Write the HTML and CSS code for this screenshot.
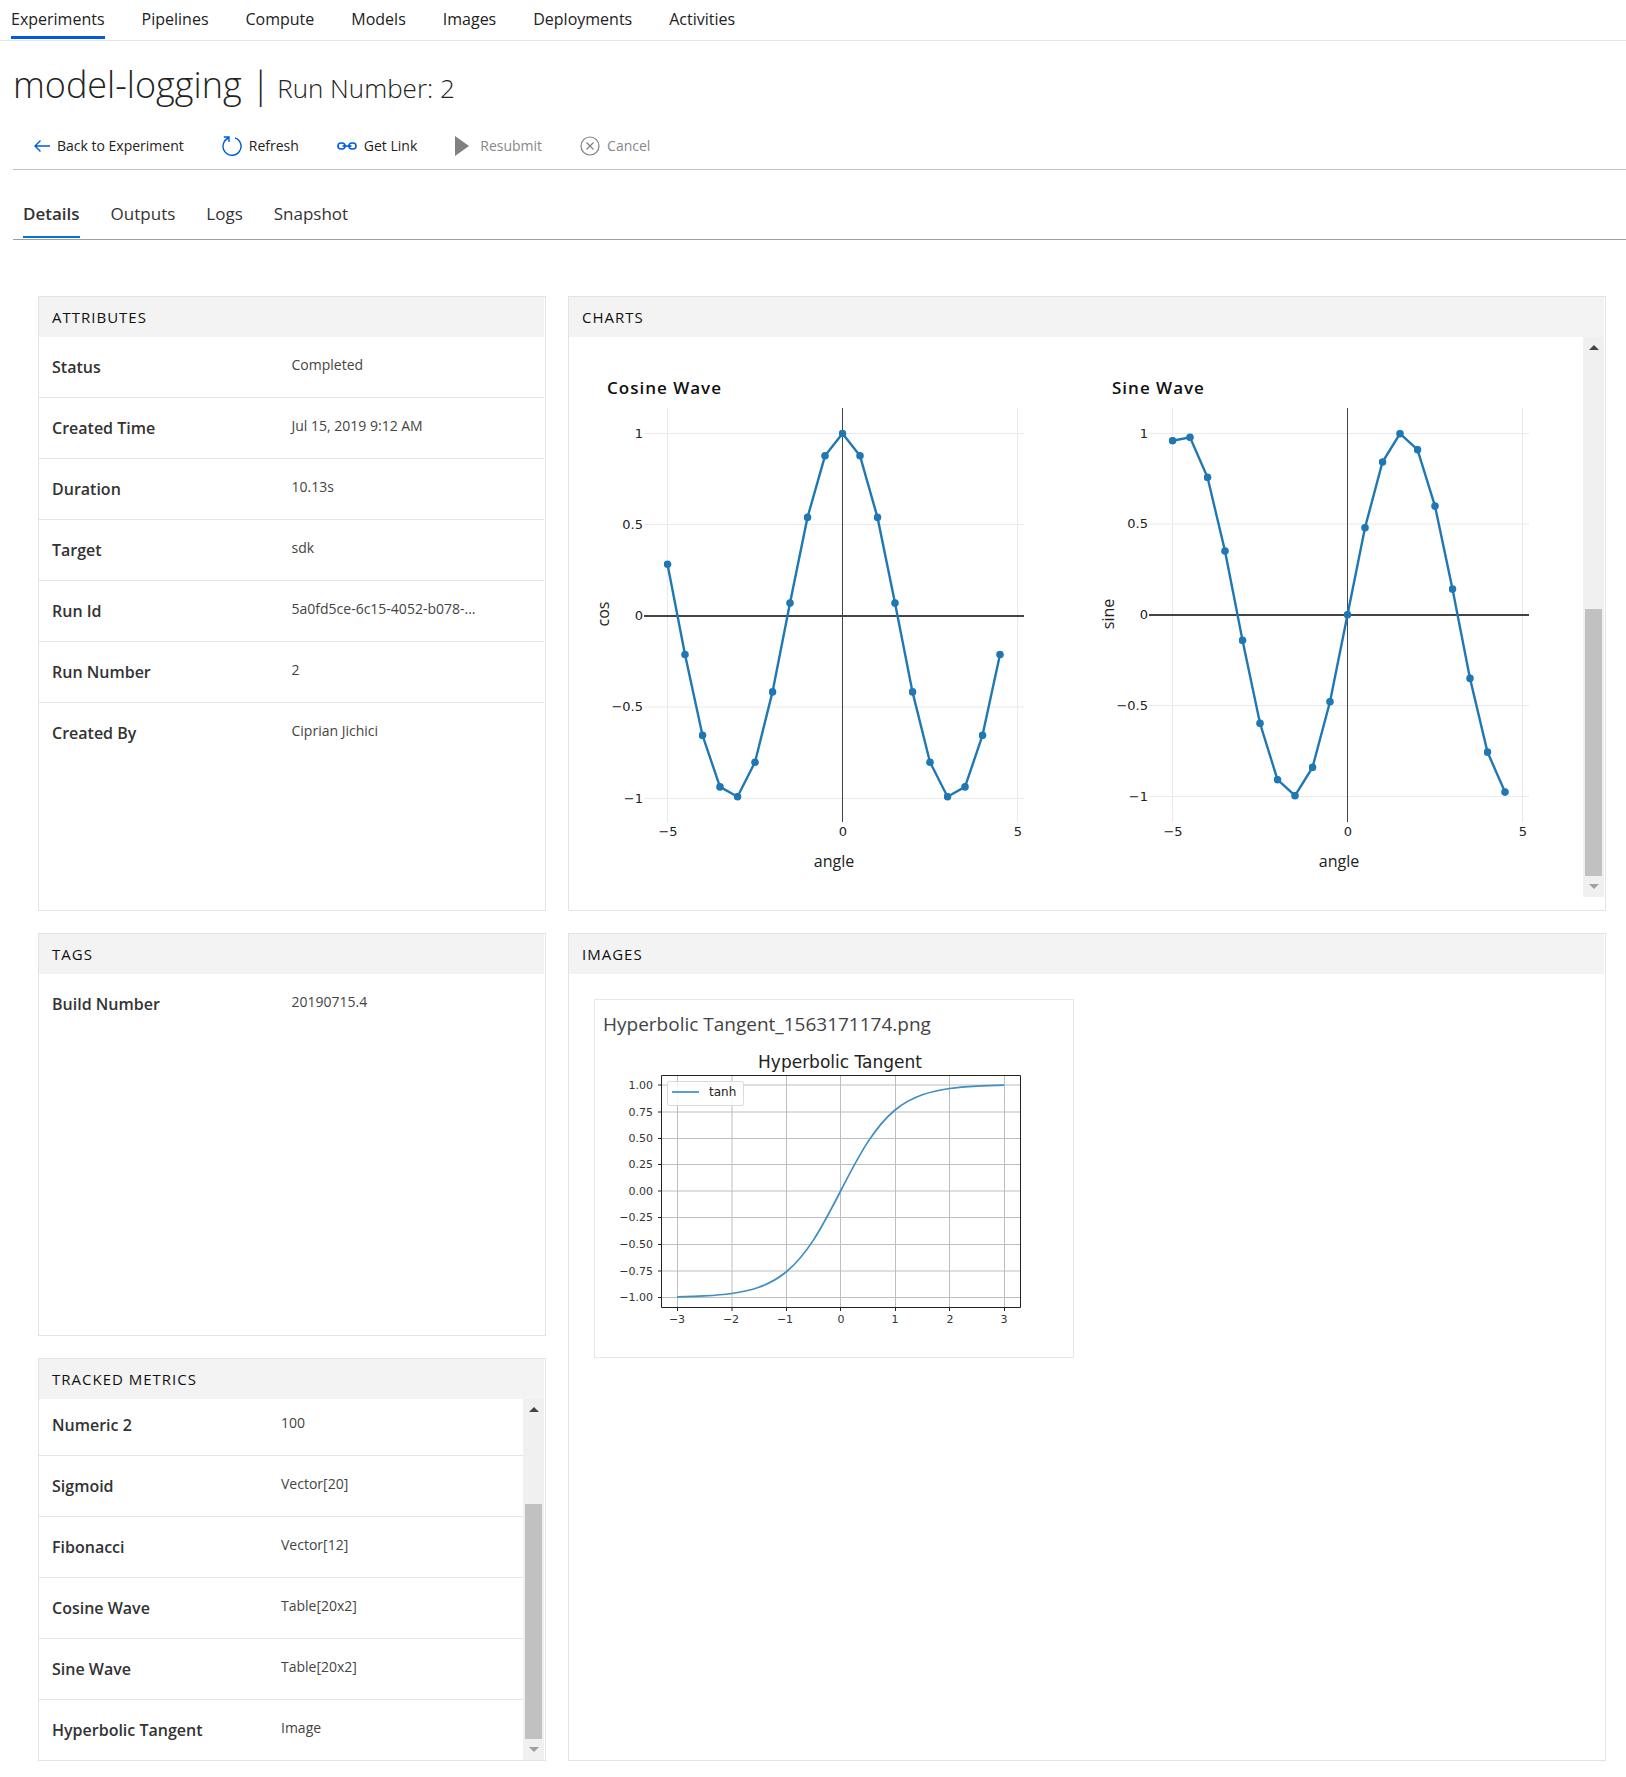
FILE: index.html
```html
<!DOCTYPE html>
<html lang="en">
<head>
<meta charset="utf-8">
<meta name="viewport" content="width=device-width, initial-scale=1">
<title>model-logging | Run Number: 2</title>
<link rel="stylesheet" href="styles.css">
</head>
<body>
<nav class="topnav" aria-label="Workspace">
  <a class="topnav-link is-active" href="#experiments">Experiments</a>
  <a class="topnav-link" href="#pipelines">Pipelines</a>
  <a class="topnav-link" href="#compute">Compute</a>
  <a class="topnav-link" href="#models">Models</a>
  <a class="topnav-link" href="#images">Images</a>
  <a class="topnav-link" href="#deployments">Deployments</a>
  <a class="topnav-link" href="#activities">Activities</a>
</nav>

<header class="run-header">
  <h1 class="run-title">model-logging |<span class="run-number"> Run Number: 2</span></h1>
  <div class="toolbar">
    <button class="tool" type="button">
      <svg class="icon" width="16" height="12" viewBox="0 0 16 12" fill="none" stroke="#015cda" stroke-width="1.4"><path d="M16 6H1M6.500 .5L1 6l5.500 5.500"/></svg>
      Back to Experiment
    </button>
    <button class="tool" type="button">
      <svg class="icon" width="20" height="22" viewBox="0 0 20 22" fill="none" stroke="#015cda" stroke-width="1.4"><path d="M13 2.800A9 9 0 1 1 6.500 3M1.800 2H7v5"/></svg>
      Refresh
    </button>
    <button class="tool" type="button">
      <svg class="icon" width="20" height="10" viewBox="0 0 20 10" fill="none" stroke="#015cda" stroke-width="1.600"><rect x="1" y="2" width="7" height="6" rx="3"/><rect x="12" y="2" width="7" height="6" rx="3"/><path d="M5.500 5h9"/></svg>
      Get Link
    </button>
    <button class="tool" type="button" disabled>
      <svg class="icon" width="18" height="20" viewBox="0 0 18 20" fill="#808080"><path d="M0 0l14 10L0 20z"/></svg>
      Resubmit
    </button>
    <button class="tool" type="button" disabled>
      <svg class="icon" width="20" height="20" viewBox="0 0 20 20" fill="none" stroke="#808080" stroke-width="1.2"><circle cx="10" cy="10" r="9"/><path d="M6.500 6.500l7 7m0-7l-7 7"/></svg>
      Cancel
    </button>
  </div>
  <nav class="tabs" aria-label="Run">
    <a class="tab is-active" href="#details">Details</a>
    <a class="tab" href="#outputs">Outputs</a>
    <a class="tab" href="#logs">Logs</a>
    <a class="tab" href="#snapshot">Snapshot</a>
  </nav>
</header>

<main class="board">
  <section class="panel panel-attributes">
    <h2 class="panel-title">Attributes</h2>
    <table class="facts">
      <tr><th scope="row">Status</th><td>Completed</td></tr>
      <tr><th scope="row">Created Time</th><td>Jul 15, 2019 9:12 AM</td></tr>
      <tr><th scope="row">Duration</th><td>10.13s</td></tr>
      <tr><th scope="row">Target</th><td>sdk</td></tr>
      <tr><th scope="row">Run Id</th><td>5a0fd5ce-6c15-4052-b078-...</td></tr>
      <tr><th scope="row">Run Number</th><td>2</td></tr>
      <tr><th scope="row">Created By</th><td>Ciprian Jichici</td></tr>
    </table>
  </section>

  <section class="panel panel-charts">
    <h2 class="panel-title">Charts</h2>
    <div class="scroll-area">
      <div class="charts">
        <figure class="chart">
          <figcaption class="chart-title">Cosine Wave</figcaption>
          <svg class="plot" width="470" height="480" viewBox="0 0 470 480" role="img" aria-label="Cosine wave">
            <defs><marker id="dot" markerUnits="userSpaceOnUse" markerWidth="8" markerHeight="8" refX="4" refY="4"><circle cx="4" cy="4" r="3.800" fill="#1f77b4"/></marker></defs>
            <path class="grid" d="M77.500 8v414M427.500 8v414M54 33.500h380M54 124.500h380M54 307h380M54 398.500h380"/>
            <path class="axis" d="M252.500 8v414"/>
            <path class="axis axis-zero" d="M54 216h380"/>
            <polyline class="series" stroke-width="2.4" points="77.5,164.2 95,254.5 112.5,335.3 130,386.9 147.5,396.7 165,362.2 182.5,291.9 200,203.1 217.5,117.4 235,55.8 252.5,33.5 270,55.8 287.5,117.4 305,203.1 322.5,291.9 340,362.2 357.5,396.7 375,386.9 392.5,335.3 410,254.5"/>
            <g class="tick tick-y"><text x="53" y="38">1</text><text x="53" y="129">0.5</text><text x="53" y="220">0</text><text x="53" y="311">−0.5</text><text x="53" y="403">−1</text></g>
            <g class="tick"><text x="78" y="436">−5</text><text x="253" y="436">0</text><text x="428" y="436">5</text></g>
            <text class="axis-name" x="244" y="467">angle</text>
            <text class="axis-name" transform="translate(19 214) rotate(-90)">cos</text>
          </svg>
        </figure>
        <figure class="chart">
          <figcaption class="chart-title">Sine Wave</figcaption>
          <svg class="plot" width="470" height="480" viewBox="0 0 470 480" role="img" aria-label="Sine wave">
            <path class="grid" d="M77.500 8v414M427.500 8v414M54 33.500h380M54 124h380M54 305.500h380M54 396.500h380"/>
            <path class="axis" d="M252.500 8v414"/>
            <path class="axis axis-zero" d="M54 215h380"/>
            <polyline class="series" stroke-width="2.4" points="77.5,40.7 95,37.3 112.5,77.3 130,151 147.5,240.3 165,323.3 182.5,379.7 200,395.7 217.5,367.4 235,301.7 252.5,214.7 270,127.7 287.5,62 305,33.7 322.5,49.7 340,106.1 357.5,189.1 375,278.4 392.5,352.1 410,392.1"/>
            <g class="tick tick-y"><text x="53" y="38">1</text><text x="53" y="128">0.5</text><text x="53" y="219">0</text><text x="53" y="310">−0.5</text><text x="53" y="401">−1</text></g>
            <g class="tick"><text x="78" y="436">−5</text><text x="253" y="436">0</text><text x="428" y="436">5</text></g>
            <text class="axis-name" x="244" y="467">angle</text>
            <text class="axis-name" transform="translate(19 214) rotate(-90)">sine</text>
          </svg>
        </figure>
      </div>
      <div class="scrollbar scrollbar-charts" aria-hidden="true"><i class="arrow-up"></i><i class="thumb"></i><i class="arrow-down"></i></div>
    </div>
  </section>

  <section class="panel panel-tags">
    <h2 class="panel-title">Tags</h2>
    <table class="facts">
      <tr><th scope="row">Build Number</th><td>20190715.4</td></tr>
    </table>
  </section>

  <section class="panel panel-metrics">
    <h2 class="panel-title">Tracked Metrics</h2>
    <div class="scroll-area">
      <div class="scrolled-end">
        <table class="facts">
          <tr><th scope="row">Numeric 2</th><td>100</td></tr>
          <tr><th scope="row">Sigmoid</th><td>Vector[20]</td></tr>
          <tr><th scope="row">Fibonacci</th><td>Vector[12]</td></tr>
          <tr><th scope="row">Cosine Wave</th><td>Table[20x2]</td></tr>
          <tr><th scope="row">Sine Wave</th><td>Table[20x2]</td></tr>
          <tr><th scope="row">Hyperbolic Tangent</th><td>Image</td></tr>
        </table>
      </div>
      <div class="scrollbar scrollbar-metrics" aria-hidden="true"><i class="arrow-up"></i><i class="thumb"></i><i class="arrow-down"></i></div>
    </div>
  </section>

  <section class="panel panel-images">
    <h2 class="panel-title">Images</h2>
    <figure class="image-card">
      <figcaption class="image-name">Hyperbolic Tangent_1563171174.png</figcaption>
      <svg class="plot" width="440" height="284" viewBox="0 0 440 284" role="img" aria-label="Hyperbolic tangent">
        <path class="mpl-grid" d="M77.500 25.500v232M132 25.500v232M186.500 25.500v232M240.500 25.500v232M295.500 25.500v232M349.500 25.500v232M404.500 25.500v232M61.500 35h359M61.500 62h359M61.500 88.500h359M61.500 114.500h359M61.500 141h359M61.500 167.500h359M61.500 194.500h359M61.500 221h359M61.500 247.500h359"/>
        <path class="mpl-curve" stroke-width="1.7" d="M77.100 246.800C86.200 246.600 95.300 246.400 104.400 245.900S122.500 244.800 131.600 243.500S149.800 240.400 158.900 237.200S177 229.400 186.100 222S204.300 204 213.400 190.100S231.500 158.700 240.600 141S258.800 105.800 267.900 91.900S286 67.400 295.100 60S313.300 48 322.400 44.800S340.500 39.800 349.600 38.500S367.800 36.600 376.900 36.100S395 35.400 404.100 35.200"/>
        <path class="mpl-frame" d="M61.500 25.500h359v232h-359zM58 35h3M58 62h3M58 88.500h3M58 114.500h3M58 141h3M58 167.500h3M58 194.500h3M58 221h3M58 247.500h3M77.500 258v3M132 258v3M186.500 258v3M240.500 258v3M295.500 258v3M349.500 258v3M404.500 258v3"/>
        <rect class="mpl-legend" x="67.500" y="31.500" width="76" height="24" rx="2"/>
        <path class="mpl-curve" stroke-width="1.7" d="M72 42h27"/>
        <text class="mpl-key" x="109" y="46">tanh</text>
        <text class="mpl-title" x="240" y="18">Hyperbolic Tangent</text>
        <g class="mpl-tick mpl-tick-y"><text x="53" y="39">1.00</text><text x="53" y="66">0.75</text><text x="53" y="92">0.50</text><text x="53" y="118">0.25</text><text x="53" y="145">0.00</text><text x="53" y="171">−0.25</text><text x="53" y="198">−0.50</text><text x="53" y="225">−0.75</text><text x="53" y="251">−1.00</text></g>
        <g class="mpl-tick"><text x="77" y="273">−3</text><text x="131" y="273">−2</text><text x="185" y="273">−1</text><text x="241" y="273">0</text><text x="295" y="273">1</text><text x="350" y="273">2</text><text x="404" y="273">3</text></g>
      </svg>
    </figure>
  </section>
</main>
</body>
</html>
```
FILE: styles.css
```css
* { box-sizing: border-box; }

body {
  margin: 0;
  background: #fff;
  color: #333;
  font-family: "Open Sans", "Noto Sans", sans-serif;
  font-size: 16px;
}

/* Workspace navigation */
.topnav {
  display: flex;
  gap: 37px;
  height: 41px;
  padding-left: 11px;
  border-bottom: 1px solid #e6e6e6;
}

.topnav-link {
  height: 39px;
  border-bottom: 3px solid transparent;
  color: #222;
  font-size: 16px;
  line-height: 38px;
  text-decoration: none;
}

.topnav-link.is-active { border-bottom-color: #015cda; }

/* Run header */
.run-header { padding-left: 13px; }

.run-title {
  margin: 0;
  padding-top: 17px;
  color: #222;
  font-size: 36px;
  font-weight: 300;
  line-height: 54px;
}

.run-number { font-size: 26px; }

.toolbar {
  display: flex;
  align-items: center;
  gap: 38px;
  height: 55px;
  padding: 8px 0 0 21px;
  border-bottom: 1px solid #c0c0c0;
}

.tool {
  display: flex;
  align-items: center;
  gap: 7px;
  padding: 0;
  border: 0;
  background: none;
  color: #222;
  font: inherit;
  font-size: 14px;
  line-height: 24px;
}

.tool:disabled { color: #888; }

.icon { flex: none; }

.tabs {
  display: flex;
  gap: 31px;
  height: 70px;
  padding: 24px 0 0 10px;
  border-bottom: 1px solid #a0a0a0;
}

.tab {
  height: 44px;
  border-bottom: 2px solid transparent;
  color: #333;
  font-size: 17px;
  line-height: 40px;
  text-decoration: none;
}

.tab.is-active {
  border-bottom-color: #0078d4;
  font-weight: 600;
}

/* Panels */
.board {
  display: grid;
  grid-template-columns: minmax(0, 508fr) minmax(0, 1038fr);
  grid-template-rows: minmax(615px, auto) 403px 403px;
  grid-template-areas:
    "attributes charts"
    "tags images"
    "metrics images";
  gap: 22px;
  padding: 56px 20px 16px 38px;
}

.panel-attributes { grid-area: attributes; }
.panel-charts { grid-area: charts; }
.panel-tags { grid-area: tags; }
.panel-metrics { grid-area: metrics; }
.panel-images { grid-area: images; }

.panel {
  display: flex;
  flex-direction: column;
  min-height: 0;
  padding-right: 1px;
  border: 1px solid #e3e3e3;
}

.panel-title {
  flex: none;
  margin: 0;
  padding-left: 13px;
  background: #f3f3f3;
  color: #111;
  font-size: 15px;
  font-weight: 400;
  letter-spacing: 1px;
  line-height: 40px;
  text-transform: uppercase;
}

.facts {
  width: 100%;
  border-collapse: separate;
  border-spacing: 0;
  table-layout: fixed;
}

.facts th,
.facts td {
  width: 50%;
  height: 61px;
  padding: 0;
  border-bottom: 1px solid #e5e5e5;
  text-align: left;
  vertical-align: top;
}

.facts tr:last-child > * {
  height: 60px;
  border-bottom: 0;
}

.facts th {
  padding-left: 13px;
  font-size: 16px;
  font-weight: 600;
  line-height: 60px;
}

.facts td {
  color: #444;
  font-size: 14px;
  line-height: 56px;
}

/* Scrolling regions */
.scroll-area {
  display: flex;
  flex: 1;
  min-height: 0;
}

.panel-charts .scroll-area { margin-bottom: 13px; }

.scrolled-end {
  display: flex;
  flex: 1;
  flex-direction: column;
  justify-content: flex-end;
  overflow: hidden;
}

.scrollbar {
  display: flex;
  flex: none;
  flex-direction: column;
  align-items: center;
  width: 21px;
  padding: 8px 0;
  background: #f0f0f0;
}

.arrow-up {
  border: 5px solid transparent;
  border-top: 0;
  border-bottom-color: #444;
}

.arrow-down {
  margin-top: 8px;
  border: 5px solid transparent;
  border-bottom: 0;
  border-top-color: #a0a0a0;
}

.thumb {
  width: 17px;
  margin-top: auto;
  background: #c1c1c1;
}

.scrollbar-charts .thumb { height: 49%; }
.scrollbar-metrics .thumb { height: 68%; }

/* Charts */
.charts {
  display: grid;
  flex: 1;
  grid-template-columns: 1fr 1fr;
  padding: 39px 4px 0 0;
}

.chart {
  margin: 0;
  padding-left: 21px;
}

.chart-title {
  padding-left: 17px;
  color: #111;
  font-size: 17px;
  font-weight: 600;
  letter-spacing: 1px;
  line-height: 24px;
}

.plot {
  display: block;
  max-width: 100%;
  font-family: "DejaVu Sans", sans-serif;
}

.grid {
  fill: none;
  stroke: #eaeaea;
}

.axis {
  fill: none;
  stroke: #444;
}

.axis-zero { stroke-width: 2px; }

.series {
  fill: none;
  stroke: #1f77b4;
  marker: url(#dot);
}

.tick {
  fill: #222;
  font-size: 13px;
  text-anchor: middle;
}

.tick-y { text-anchor: end; }

.axis-name {
  fill: #222;
  font-family: "Open Sans", sans-serif;
  font-size: 16px;
  text-anchor: middle;
}

/* Logged images */
.image-card {
  width: 480px;
  max-width: calc(100% - 52px);
  height: 359px;
  margin: 25px 25px 0;
  padding-top: 8px;
  border: 1px solid #e8e8e8;
}

.image-name {
  padding-left: 8px;
  color: #444;
  font-size: 19px;
  line-height: 32px;
}

.image-card .plot {
  margin: 10px 0 0 5px;
}

.mpl-grid {
  fill: none;
  stroke: #bdbdbd;
}

.mpl-frame {
  fill: none;
  stroke: #222;
}

.mpl-curve {
  fill: none;
  stroke: #3f8ec4;
}

.mpl-legend {
  fill: #fff;
  fill-opacity: .85;
  stroke: #dadada;
}

.mpl-key {
  fill: #222;
  font-size: 12px;
}

.mpl-title {
  fill: #222;
  font-size: 17px;
  text-anchor: middle;
}

.mpl-tick {
  fill: #333;
  font-size: 11px;
  text-anchor: middle;
}

.mpl-tick-y { text-anchor: end; }
```
